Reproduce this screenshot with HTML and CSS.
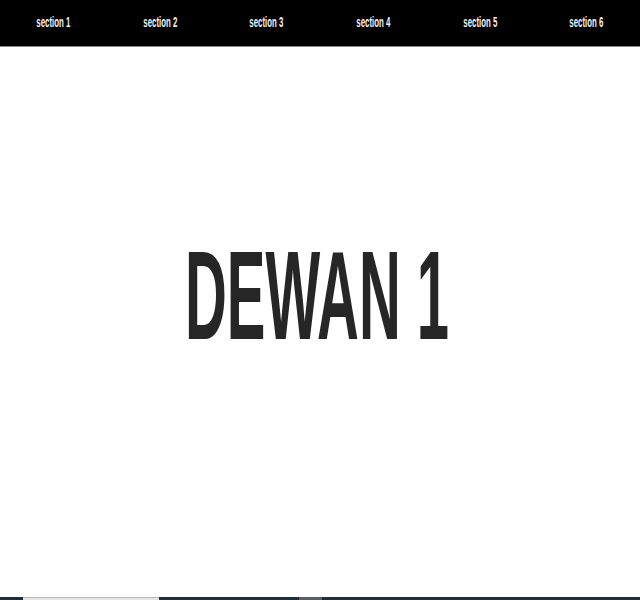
FILE: index.html
```html
<!DOCTYPE html>
<html lang="en">
<head>
<meta charset="utf-8">
<title>Dewan 1</title>
<link rel="stylesheet" href="styles.css">
</head>
<body>
<nav class="topnav">
  <a class="nav-item" href="#s1"><span class="squeeze">section 1</span></a>
  <a class="nav-item" href="#s2"><span class="squeeze">section 2</span></a>
  <a class="nav-item" href="#s3"><span class="squeeze">section 3</span></a>
  <a class="nav-item" href="#s4"><span class="squeeze">section 4</span></a>
  <a class="nav-item" href="#s5"><span class="squeeze">section 5</span></a>
  <a class="nav-item" href="#s6"><span class="squeeze">section 6</span></a>
</nav>
<main>
  <section class="hero" id="s1">
    <h1 class="hero-title"><span class="squeeze-big">DEWAN 1</span></h1>
  </section>
  <div class="next-peek">
    <div class="peek-light"></div>
    <div class="peek-dark"></div>
    <div class="peek-grey"></div>
    <div class="peek-rest"></div>
  </div>
</main>
</body>
</html>
```
FILE: styles.css
```css
html, body {
  margin: 0;
  padding: 0;
  background: #ffffff;
  font-family: "Liberation Sans", Arial, sans-serif;
  overflow: hidden;
}

.topnav {
  position: fixed;
  top: 0;
  left: 0;
  right: 0;
  height: 46px;
  background: #000000;
  border-bottom: 1px solid #8a8a8a;
  display: grid;
  grid-template-columns: repeat(6, 1fr);
  align-items: center;
  z-index: 10;
}

.nav-item {
  display: flex;
  justify-content: center;
  color: #f2f2f2;
  text-decoration: none;
  font-weight: bold;
  font-size: 14px;
  line-height: 16px;
  padding-bottom: 2px;
}

.squeeze {
  display: inline-block;
  transform: scaleX(0.56);
  white-space: nowrap;
}

.hero {
  height: 597px;
  box-sizing: border-box;
  padding-bottom: 4px;
  display: flex;
  align-items: center;
  justify-content: center;
}

.hero-title {
  margin: 0;
  padding-right: 6px;
  font-size: 126px;
  font-weight: bold;
  color: #262626;
  line-height: 1.15;
  white-space: nowrap;
}

.squeeze-big {
  display: inline-block;
  transform: scaleX(0.46);
}

.next-peek {
  height: 3px;
  display: flex;
  background: #1f2e38;
}

.peek-light {
  margin-left: 23px;
  width: 136px;
  background: #e4e4e4;
  border-top: 1px solid #b8b8b8;
  box-sizing: border-box;
}

.peek-dark {
  width: 140px;
}

.peek-grey {
  width: 23px;
  background: #5a5f63;
}

.peek-rest {
  flex: 1;
}
```
